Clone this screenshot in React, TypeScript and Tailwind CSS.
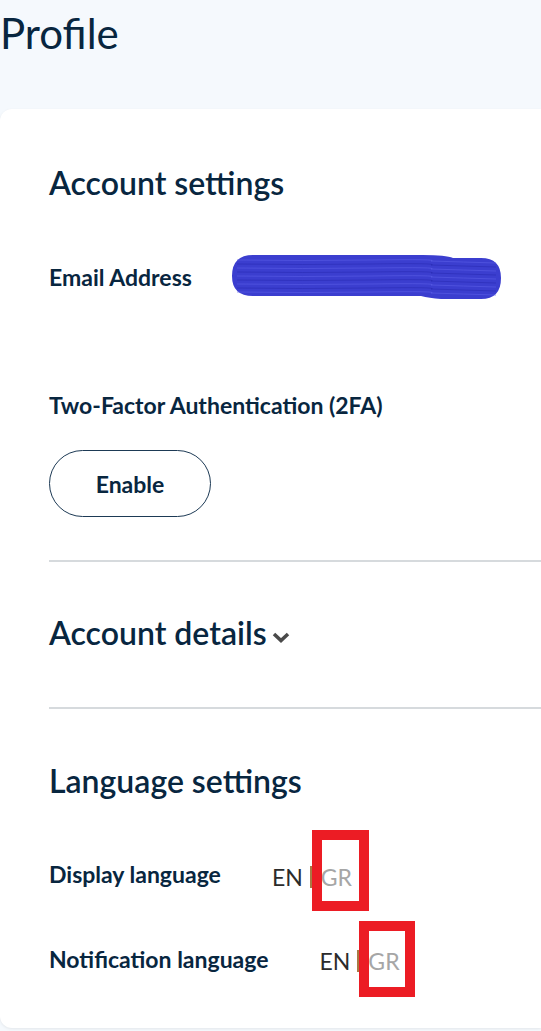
import React from "react";

function LangToggle({ shift, box }: { shift: string; box: string }) {
  return (
    <div className={`ml-[51px] flex items-center text-[23px] leading-[28px] ${shift}`}>
      <span className="text-[#2b2b2b]">EN</span>
      <span className="ml-[7px] mr-[9px] h-[22px] w-[2px] bg-[#a97a44]" />
      <span className="relative text-[#a6a6a6]">
        GR
        {/* red annotation box from the screenshot */}
        <span className={`pointer-events-none absolute border-[10px] border-[#ec1c24] ${box}`} />
      </span>
    </div>
  );
}

function Scribble() {
  return (
    <svg width="271" height="46" viewBox="0 0 271 46" className="block">
      <path
        d="M22 1 L192 1 Q215 1 222 4 L250 4 Q270 4 270 24 Q270 45 250 45 L210 45 Q198 44 190 42 L22 42 Q1 42 1 22 Q1 1 22 1 Z"
        fill="#3b3ecf"
      />
      {[6, 10, 14, 18, 22, 26, 30, 34, 38].map((y, i) => (
        <path
          key={y}
          d={`M6 ${y} Q70 ${y + 1} 140 ${y} T200 ${y + 1} Q232 ${y + 2} 265 ${y + 3}`}
          stroke={i % 2 ? "#2a2cb4" : "#5a5ee6"}
          strokeWidth="1"
          fill="none"
          opacity="0.6"
        />
      ))}
    </svg>
  );
}

export default function App() {
  return (
    <div
      className="min-h-[1031px] bg-[#f5f9fd] text-[#08263f]"
      style={{ fontFamily: "Lato, 'Noto Sans', sans-serif" }}
    >
      <h1 className="pt-[8px] text-[42px] leading-[50px]">Profile</h1>

      <div className="mt-[51px] rounded-l-[12px] bg-white pb-[53px] pl-[49px] pt-[54px] shadow-[0_1px_3px_rgba(0,0,0,0.08)]">
        <h2 className="text-[32px] font-semibold leading-[40px]">Account settings</h2>

        <div className="mt-[51px] flex items-center">
          <span className="w-[182px] text-[23px] font-bold leading-[28px]">Email Address</span>
          <Scribble />
        </div>

        <div className="mt-[91px] text-[23px] font-bold leading-[28px]">
          Two-Factor Authentication (2FA)
        </div>
        <button className="mt-[31px] h-[67px] w-[162px] rounded-full border border-[#1d3a55] text-[23px] font-bold leading-[28px]">
          Enable
        </button>

        <div className="mt-[43px] h-[2px] bg-[#d6dadd]" />

        <div className="mt-[51px] flex items-center">
          <h2 className="text-[32px] font-semibold leading-[40px]">Account details</h2>
          <svg width="18" height="11" viewBox="0 0 18 11" className="ml-[5px] mt-[8px]">
            <polyline points="2,2 9,8.5 16,2" stroke="#4a4a4a" strokeWidth="3.6" fill="none" />
          </svg>
        </div>

        <div className="mt-[54px] h-[2px] bg-[#d6dadd]" />

        <h2 className="mt-[52px] text-[32px] font-semibold leading-[40px]">Language settings</h2>

        <div className="mt-[59px] flex items-start">
          <span className="text-[23px] font-bold leading-[28px]">Display language</span>
          <LangToggle shift="mt-[3px]" box="-left-[9px] -top-[33px] h-[81px] w-[57px]" />
        </div>
        <div className="mt-[54px] flex items-start">
          <span className="text-[23px] font-bold leading-[28px]">Notification language</span>
          <LangToggle shift="mt-[2px]" box="-left-[9px] -top-[26px] h-[76px] w-[56px]" />
        </div>
      </div>
    </div>
  );
}
